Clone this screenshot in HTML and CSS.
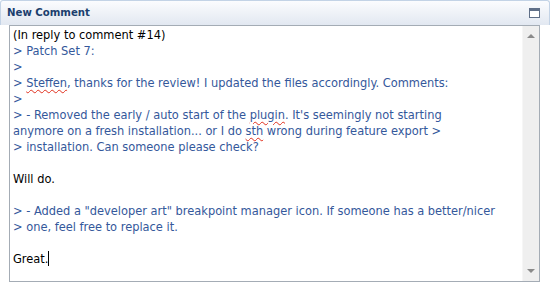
FILE: index.html
```html
<!DOCTYPE html>
<html>
<head>
<meta charset="utf-8">
<link rel="stylesheet" href="styles.css">
</head>
<body>
<div class="panel">
  <div class="header">
    <span class="title">New Comment</span>
    <svg class="max" width="11" height="10" viewBox="0 0 11 10"><rect x="0.5" y="0.5" width="10" height="9" fill="#fff" stroke="#5f6f88"/><rect x="1" y="1" width="9" height="2" fill="#5f6f88"/></svg>
  </div>
  <div class="body">
    <div class="editor">
      <div class="text">
        <div class="line">(In reply to comment #14)</div>
        <div class="line q">&gt; Patch Set 7:</div>
        <div class="line q">&gt;</div>
        <div class="line q">&gt; <span class="sp">Steffen</span>, thanks for the review! I updated the files accordingly. Comments:</div>
        <div class="line q">&gt;</div>
        <div class="line q">&gt; - Removed the early / auto start of the <span class="sp">plugin</span>. It's seemingly not starting</div>
        <div class="line q">anymore on a fresh installation... or I do <span class="sp">sth</span> wrong during feature export &gt;</div>
        <div class="line q">&gt; installation. Can someone please check?</div>
        <div class="line">&nbsp;</div>
        <div class="line">Will do.</div>
        <div class="line">&nbsp;</div>
        <div class="line q">&gt; - Added a "developer art" breakpoint manager icon. If someone has a better/nicer</div>
        <div class="line q">&gt; one, feel free to replace it.</div>
        <div class="line">&nbsp;</div>
        <div class="line">Great.<span class="caret"></span></div>
      </div>
      <div class="scroll">
        <span class="arr up"></span>
        <span class="arr down"></span>
      </div>
    </div>
  </div>
</div>
</body>
</html>
```

FILE: styles.css
```css
html, body {
  margin: 0;
  padding: 0;
  background: #fff;
}
body {
  width: 550px;
  height: 283px;
  overflow: hidden;
  font-family: "DejaVu Sans Condensed", "DejaVu Sans", sans-serif;
}
.panel {
  width: 550px;
}
.header {
  box-sizing: border-box;
  height: 25px;
  border: 1px solid #c3d3e6;
  border-bottom: none;
  border-radius: 3px 3px 0 0;
  background: linear-gradient(#fbfcfe, #e2e8f1);
  display: flex;
  align-items: center;
  justify-content: space-between;
  padding: 0 9px 1px 6px;
}
.title {
  font-weight: bold;
  font-size: 11.3px;
  color: #1c3f6e;
}
.max {
  display: block;
  margin-top: 1px;
}
.body {
  padding: 0 10px 0 9px;
}
.editor {
  box-sizing: border-box;
  height: 257px;
  border: 1px solid #a4acb5;
  display: flex;
}
.text {
  flex: 1;
  padding: 1px 0 0 3px;
  font-size: 12.7px;
  line-height: 16px;
  color: #000;
  overflow: hidden;
}
.line {
  white-space: pre;
  height: 16px;
}
.q {
  color: #34589b;
}
.sp {
  text-decoration: underline wavy #e0301e;
  text-decoration-thickness: 1px;
  text-underline-offset: 2px;
}
.caret {
  display: inline-block;
  width: 1px;
  height: 15px;
  background: #000;
  vertical-align: -3px;
}
.scroll {
  width: 16px;
  background: #efefef;
  border-left: 1px solid #f6f6f6;
  display: flex;
  flex-direction: column;
  justify-content: space-between;
  align-items: center;
  padding: 8px 0 8px;
}
.arr {
  width: 0;
  height: 0;
  border-left: 4px solid transparent;
  border-right: 4px solid transparent;
}
.up {
  border-bottom: 4px solid #8a8a8a;
}
.down {
  border-top: 4px solid #8a8a8a;
}
```
